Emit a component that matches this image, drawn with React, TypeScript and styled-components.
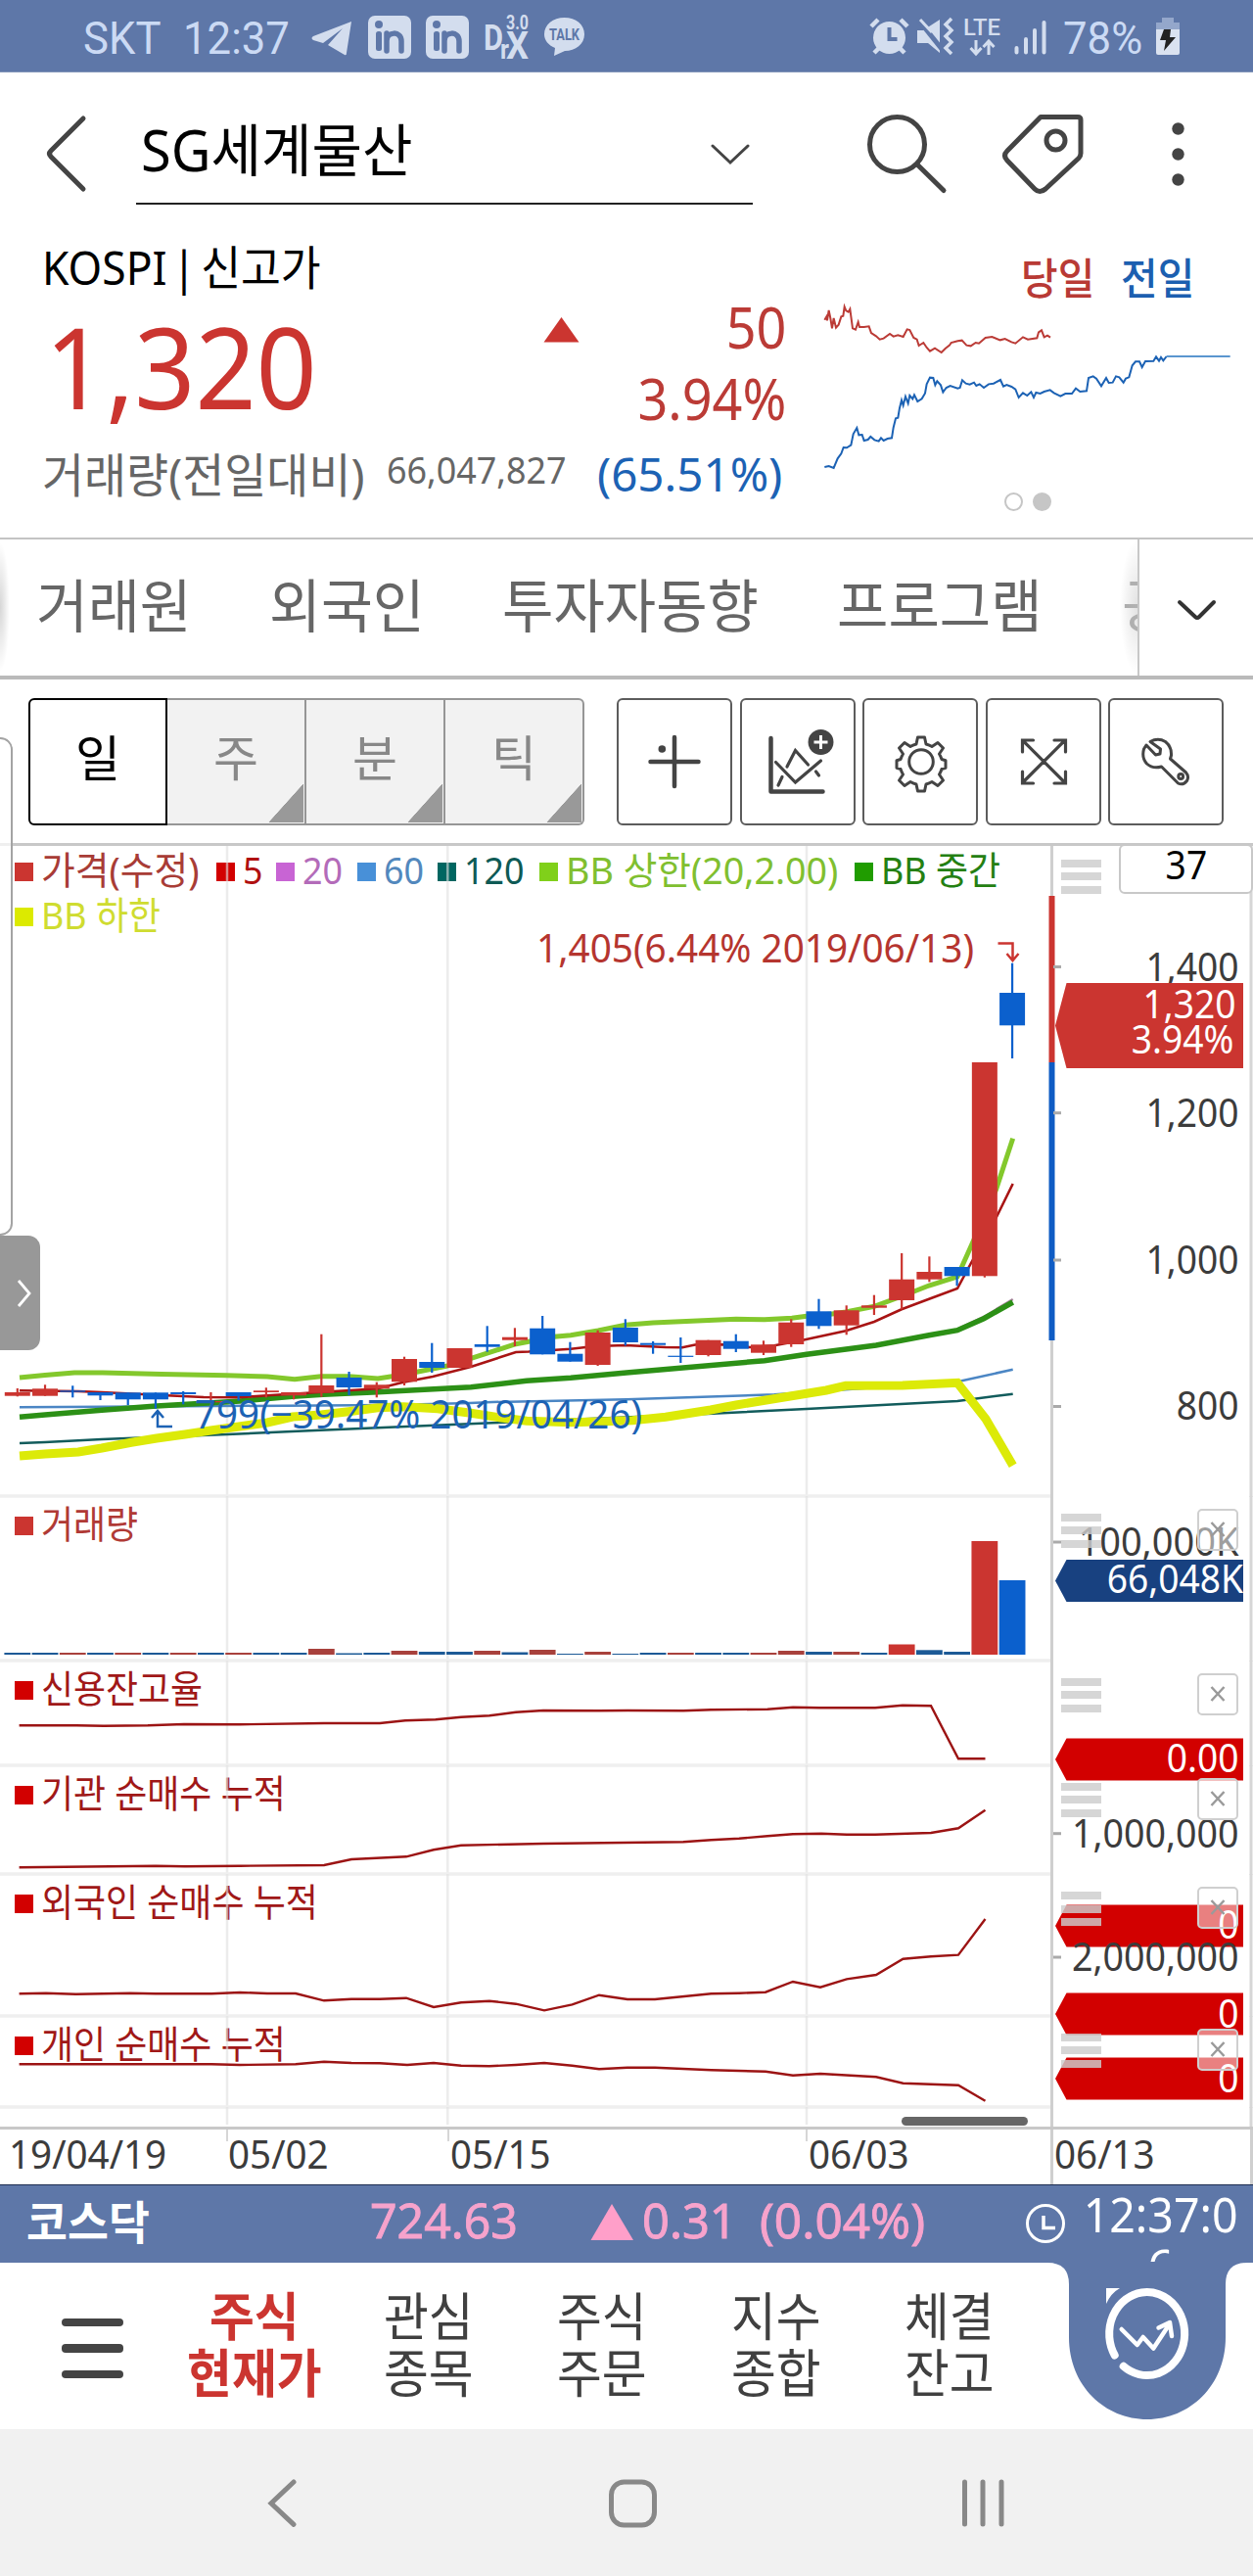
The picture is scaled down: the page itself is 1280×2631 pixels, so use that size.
import React from "react";
import styled, { createGlobalStyle } from "styled-components";

const RED = "#cb3530";
const BLUE = "#0b60cd";
const DEEP = "#d20000";
const NAVY = "#5e77a8";
const FONT = `"Noto Sans", "Noto Sans CJK KR", sans-serif`;

const Global = createGlobalStyle`
  * { box-sizing: border-box; }
  body { margin: 0; background: #fff; font-family: ${FONT}; }
  svg { display: block; overflow: visible; }
`;

const Screen = styled.div`
  width: 1280px;
  height: 2631px;
  display: flex;
  flex-direction: column;
  background: #fff;
  overflow: hidden;
  position: relative;
`;

const Text = styled.span<{
  $size: number;
  $color?: string;
  $sx?: number;
  $weight?: number;
  $end?: boolean;
  $top?: number;
  $word?: number;
  $stroke?: number;
}>`
  display: block;
  flex: none;
  white-space: pre;
  line-height: 1;
  font-size: ${(p) => p.$size}px;
  color: ${(p) => p.$color ?? "#000"};
  font-weight: ${(p) => p.$weight ?? 400};
  margin-top: ${(p) => p.$top ?? 0}px;
  word-spacing: ${(p) => p.$word ?? 0}px;
  -webkit-text-stroke: ${(p) => p.$stroke ?? 0}px ${(p) => p.$color ?? "#000"};
  transform: scaleX(${(p) => p.$sx ?? 0.93});
  transform-origin: ${(p) => (p.$end ? "right" : "left")} center;
`;

/* ---------- status bar ---------- */

const StatusBar = styled.header`
  height: 74px;
  flex: none;
  display: flex;
  justify-content: space-between;
  padding: 0 75px 0 85px;
  background: ${NAVY};
  border-bottom: 1px solid #8396b8;
`;
const StatusGroup = styled.div`
  display: flex;
  align-items: flex-start;
`;
const StatusText = styled.span<{ $w: number }>`
  width: ${(p) => p.$w}px;
  padding-top: 12px;
  font: 400 47px/54px Roboto, sans-serif;
  color: #cbdaf4;
  white-space: pre;
  transform: scaleX(0.93);
  transform-origin: left center;
`;
const ICON = "#d3ddee";

const LinkedIn = ({ x }: { x: number }) => (
  <g transform={`translate(${x} 16)`}>
    <rect width="44" height="44" rx="7" fill={ICON} />
    <circle cx="11" cy="9" r="4" fill={NAVY} />
    <rect x="8" y="16" width="6" height="20" rx="2.5" fill={NAVY} />
    <path d="M19 36V18M19 26c0-10 15-11 15 0v10" fill="none" stroke={NAVY} strokeWidth="5.5" strokeLinecap="round" />
  </g>
);

const NoticeIcons = () => (
  <svg width="300" height="74" viewBox="311 0 300 74">
    <path d="M359 22 320 37q-3 2 0 4l10 3 20-15-15 17 17 10q2 1 2-2z" fill={ICON} />
    <LinkedIn x={376} />
    <LinkedIn x={435} />
    <g fill={ICON} fontFamily="Roboto, sans-serif" fontWeight="700">
      <text x="494" y="51" fontSize="36" textLength="20" lengthAdjust="spacingAndGlyphs">D</text>
      <text x="511" y="60" fontSize="28" textLength="9" lengthAdjust="spacingAndGlyphs">r</text>
      <text x="517" y="60" fontSize="38" textLength="23" lengthAdjust="spacingAndGlyphs">X</text>
      <text x="517" y="30" fontSize="20" textLength="23" lengthAdjust="spacingAndGlyphs">3.0</text>
    </g>
    <path d="M576.500 18c12 0 20.500 7 20.500 17s-9 17-20 17l-11 5 1-8c-7-3-11-8-11-14 0-10 9-17 20.500-17z" fill={ICON} />
    <text x="561" y="41" fontSize="16" fontWeight="700" fontFamily="Roboto, sans-serif" fill={NAVY} textLength="31" lengthAdjust="spacingAndGlyphs">TALK</text>
  </svg>
);

const SystemIcons = () => (
  <svg width="200" height="74" viewBox="885 0 200 74">
    <circle cx="907.500" cy="38.500" r="16.500" fill={ICON} />
    <path d="M907.500 28v12h8" fill="none" stroke={NAVY} strokeWidth="4" />
    <path d="M889 27l7-7M926 27l-7-7M892 54l6-6M923 54l-6-6" stroke={ICON} strokeWidth="4.500" />
    <path d="M936 31h6l17-11v34l-12-10h-11z" fill={ICON} />
    <path d="M937 20l24 30" stroke={NAVY} strokeWidth="5" />
    <path d="M939 20l12 13" stroke={ICON} strokeWidth="3" />
    <path d="M971 19l-6 6 6 6-6 6 6 6-6 6 6 6" fill="none" stroke={ICON} strokeWidth="3.500" />
    <text x="983" y="36" fontSize="23" fontWeight="500" fontFamily="Roboto, sans-serif" fill={ICON} textLength="38" lengthAdjust="spacingAndGlyphs">LTE</text>
    <path d="M996 41v14M990.500 49l5.500 6 5.500-6M1009 56V42M1003.500 48l5.500-6 5.500 6" fill="none" stroke={ICON} strokeWidth="3" />
    <path d="M1037.500 49v4.500M1047 40v13.500M1056 31v22.500M1065.500 23v30.500" stroke={ICON} strokeWidth="4" strokeLinecap="round" />
  </svg>
);

const Battery = () => (
  <svg width="24" height="74" viewBox="1181 0 24 74">
    <path d="M1187 18h12v5h6v7h-24v-7h6z" fill="#94a7cb" />
    <path d="M1181 30h24v24q0 2-2 2h-20q-2 0-2-2z" fill="#dae2f0" />
    <path d="M1189 30h7l-1 8h6l-12 14 2-11h-6z" fill="#222" />
  </svg>
);

/* ---------- header ---------- */

const Header = styled.div`
  height: 156px;
  flex: none;
  display: flex;
`;
const BackBox = styled.div`
  width: 139px;
`;
const NameField = styled.div`
  width: 630px;
  height: 135px;
  display: flex;
  justify-content: space-between;
  padding: 49px 3px 0 5px;
  border-bottom: 2.500px solid #222;
`;

/* ---------- quote ---------- */

const Quote = styled.section`
  height: 319px;
  flex: none;
  display: flex;
`;
const QuoteMain = styled.div`
  width: 820px;
  display: flex;
  flex-direction: column;
`;
const MarketRow = styled.div`
  height: 67px;
  padding: 19px 0 0 43px;
`;
const PriceRow = styled.div`
  height: 146px;
  display: flex;
  justify-content: space-between;
  padding: 0 17px 0 46px;
`;
const Change = styled.div`
  display: flex;
  gap: 15px;
  flex-direction: column;
  align-items: flex-end;
  padding-top: 8px;
`;
const ChangeLine = styled.div`
  display: flex;
`;
const VolumeRow = styled.div`
  display: flex;
  justify-content: space-between;
  padding: 17px 21px 0 43px;
`;
const VolumeName = styled.div`
  width: 351px;
`;
const VolumeCount = styled.div`
  width: 212px;
`;
const Spark = styled.div`
  flex: 1;
  position: relative;
  display: flex;
  flex-direction: column;
`;
const SparkLegend = styled.div`
  height: 270px;
  display: flex;
  gap: 21px;
  padding: 32px 0 0 223px;
`;
const SparkPlot = styled.svg`
  position: absolute;
  left: -20px;
  top: 0;
`;
const Pager = styled.div`
  display: flex;
  gap: 10px;
  padding: 3px 0 0 206px;
`;
const PagerDot = styled.i<{ $on?: boolean }>`
  width: 19px;
  height: 19px;
  border-radius: 50%;
  border: 2px solid #c6c6c6;
  background: ${(p) => (p.$on ? "#c6c6c6" : "#fff")};
`;

/* ---------- tabs ---------- */

const Tabs = styled.nav`
  height: 145px;
  flex: none;
  display: flex;
  border-top: 2px solid #c4c4c4;
  border-bottom: 4px solid #bababa;
`;
const TabList = styled.div`
  width: 1162px;
  overflow: hidden;
  display: flex;
  padding: 38px 0 0 37px;
  position: relative;
  &::before,
  &::after {
    content: "";
    position: absolute;
    top: 0;
    height: 138px;
  }
  &::before {
    left: 0;
    width: 10px;
    background: radial-gradient(ellipse 10px 66px at left, rgba(0, 0, 0, 0.16), transparent);
  }
  &::after {
    right: 0;
    width: 20px;
    background: radial-gradient(ellipse 18px 69px at right, rgba(190, 190, 190, 0.45), transparent);
  }
`;
const Tab = styled.div<{ $w: number }>`
  width: ${(p) => p.$w}px;
  flex: none;
`;
const TabMore = styled.div`
  flex: 1;
  border-left: 2px solid #c8c8c8;
  padding: 61px 0 0 38px;
`;

/* ---------- chart toolbar ---------- */

const Toolbar = styled.div`
  height: 167px;
  flex: none;
  display: flex;
  padding: 19px 0 0 29px;
`;
const Periods = styled.div`
  display: grid;
  grid-template-columns: 142px 142px 142px 142px;
  width: 568px;
  height: 130px;
  margin-right: 33px;
`;
const Period = styled.div<{ $on?: boolean }>`
  position: relative;
  display: flex;
  justify-content: center;
  padding-top: 34px;
  background: ${(p) => (p.$on ? "#fff" : "#f2f2f2")};
  border: 2px solid ${(p) => (p.$on ? "#000" : "#969696")};
  border-left-width: ${(p) => (p.$on ? 2 : 0)}px;
  &:first-child {
    border-radius: 6px 0 0 6px;
  }
  &:last-child {
    border-radius: 0 6px 6px 0;
  }
`;
const Corner = styled.i`
  position: absolute;
  right: 1px;
  bottom: 1px;
  width: 36px;
  height: 40px;
  background: linear-gradient(to bottom right, transparent 50%, #999 51%);
`;
const Tools = styled.div`
  display: flex;
  gap: 7.500px;
`;
const Tool = styled.button`
  width: 118px;
  height: 130px;
  padding: 0;
  border: 2px solid #5c5c5c;
  border-radius: 6px;
  background: #fff;
`;

/* ---------- chart ---------- */

const Chart = styled.main`
  flex: none;
  height: 1371px;
  display: flex;
  flex-direction: column;
  border-top: 3px solid #c8c8c8;
  border-bottom: 1px solid #1c2c50;
  position: relative;
`;
const PanelRow = styled.section<{ $h: number }>`
  height: ${(p) => p.$h}px;
  flex: none;
  display: flex;
`;
const PlotCell = styled.div`
  width: 1074px;
  position: relative;
`;
const AxisCell = styled.div`
  width: 206px;
  position: relative;
`;
const Layer = styled.svg`
  position: absolute;
  left: 0;
  top: 0;
`;
const Legend = styled.div<{ $top: number }>`
  position: relative;
  display: flex;
  flex-wrap: wrap;
  padding: ${(p) => p.$top}px 0 0 15px;
`;
const LegendItem = styled.div<{ $w: number; $color: string }>`
  width: ${(p) => p.$w}px;
  height: 46px;
  display: flex;
  gap: 8px;
  &::before {
    content: "";
    width: 19px;
    height: 18.500px;
    margin-top: 11px;
    flex: none;
    background: ${(p) => p.$color};
  }
`;
const Handle = styled.div<{ $top: number }>`
  position: absolute;
  left: 10px;
  top: ${(p) => p.$top}px;
  width: 41px;
  height: 35px;
  opacity: 0.82;
  background: repeating-linear-gradient(to bottom, #cdcdcd 0 8px, transparent 8px 13.500px);
`;
const CloseBox = styled.div`
  position: absolute;
  left: 149px;
  top: 13px;
  width: 42px;
  height: 43px;
  border: 2px solid #cfcfcf;
  border-radius: 5px;
  background: rgba(255, 255, 255, 0.5);
  padding: 11px 0 0 11px;
`;
const CountBox = styled.div`
  position: absolute;
  left: 69px;
  top: -2px;
  width: 137px;
  height: 51px;
  border: 2px solid #c8c8c8;
  border-radius: 6px;
  background: #fff;
  display: flex;
  justify-content: center;
`;
const DateRow = styled.div`
  flex: 1;
  display: flex;
  border-top: 3px solid #c8c8c8;
`;
const DateCell = styled.div<{ $w: number; $pad: number; $rule?: boolean; $tick?: boolean }>`
  width: ${(p) => p.$w}px;
  padding: 5px 0 0 ${(p) => p.$pad}px;
  border-left: ${(p) => (p.$rule ? "3px solid #cfcfcf" : "0")};
  background: ${(p) => (p.$tick ? "linear-gradient(#d6d6d6,#d6d6d6) left top / 2px 12px no-repeat" : "none")};
`;
const ScrollThumb = styled.i`
  position: absolute;
  left: 921px;
  top: 1298px;
  width: 129px;
  height: 9px;
  border-radius: 5px;
  background: #666;
`;
const DrawerEdge = styled.div`
  position: absolute;
  left: -12px;
  top: 753px;
  width: 25px;
  height: 509px;
  border: 2px solid #a4a4a4;
  border-radius: 14px;
  background: rgba(255, 255, 255, 0.7);
`;
const DrawerHandle = styled.div`
  position: absolute;
  left: 0;
  top: 1262px;
  width: 41px;
  height: 117px;
  border-radius: 0 12px 12px 0;
  background: #989898;
  padding: 46px 0 0 18px;
`;

const STEP = 28.23;
const FIRST = 17.8;

type Candle = [up: 0 | 1, bodyTop: number, bodyBottom: number, high: number, low: number];
const candles: Candle[] = [
  [1, 1422, 1425.7, 1418, 1426.3],
  [1, 1418.3, 1425.7, 1414.3, 1425.7],
  [0, 1420.3, 1421.7, 1415.3, 1427.3],
  [0, 1422, 1425.3, 1422, 1430],
  [0, 1422.3, 1429.3, 1422.3, 1435],
  [0, 1422.3, 1429.3, 1422.3, 1438.7],
  [0, 1422, 1424, 1421, 1434.3],
  [1, 1431, 1432.3, 1422, 1433.3],
  [0, 1422, 1426, 1422, 1430.7],
  [1, 1420.3, 1422, 1417.3, 1427.3],
  [1, 1422, 1425.3, 1422, 1429.3],
  [1, 1415, 1422.7, 1362.7, 1426.7],
  [0, 1407, 1417, 1401, 1425],
  [1, 1414.3, 1418.3, 1411.7, 1427.3],
  [1, 1388, 1411.3, 1385.7, 1415],
  [0, 1391, 1397, 1371.7, 1402],
  [1, 1377, 1397, 1377, 1397],
  [0, 1373, 1375.7, 1354.3, 1380.7],
  [1, 1365.7, 1368.7, 1356.3, 1375],
  [0, 1356.7, 1383.3, 1344, 1383.3],
  [0, 1382.7, 1390.7, 1370.7, 1390.7],
  [1, 1361, 1394, 1358.7, 1395],
  [0, 1356, 1371, 1347.3, 1374.3],
  [0, 1371.7, 1373.7, 1370, 1382.7],
  [0, 1384.7, 1385.9, 1366, 1392],
  [1, 1368.7, 1384, 1368.7, 1385.3],
  [0, 1369.7, 1377.7, 1362.7, 1381],
  [1, 1373.3, 1381.7, 1369.3, 1384],
  [1, 1350.7, 1373, 1347.3, 1375.7],
  [0, 1339.3, 1354.3, 1326.7, 1357.3],
  [1, 1338.3, 1353.7, 1333.3, 1363.3],
  [1, 1333.3, 1335.7, 1322.7, 1343],
  [1, 1306.7, 1328, 1280, 1337.3],
  [1, 1299, 1306.7, 1283.3, 1309.3],
  [0, 1294, 1303.3, 1294, 1313.3],
  [1, 1085, 1303.3, 1085, 1304.7],
  [0, 1014, 1047.3, 983.7, 1081],
];

const volumes: [up: 0 | 1, height: number][] = [
  [0, 2], [0, 2], [1, 2], [0, 2], [1, 2], [0, 2], [1, 2], [0, 2], [1, 2], [0, 2], [0, 2], [1, 6], [0, 1.5],
  [0, 2], [1, 4], [0, 3], [0, 3], [1, 4], [0, 2.5], [1, 5], [0, 1], [1, 3], [0, 1], [0, 2], [1, 2], [0, 2],
  [0, 2], [1, 2], [1, 4], [0, 3], [1, 3], [0, 2], [1, 10.5], [0, 4.7], [0, 3], [1, 116], [0, 76],
];

const overlays: { color: string; width: number; points: string }[] = [
  { color: "#4b86c4", width: 2.5, points: "20,1437.3 150,1436.5 400,1435 480,1433 503,1432 640,1429.3 791,1424.3 925,1415 978,1411.3 1034.7,1398.7" },
  { color: "#125c5c", width: 2.5, points: "20,1474 46,1473 104,1470 232,1465 304,1461.7 503,1453.3 728,1443.7 824,1439 978,1431 1034.7,1423.7" },
  { color: "#a9829e", width: 2.5, points: "978,1357.5 1005,1345 1034.7,1327" },
  { color: "#83c82c", width: 5, points: "20,1407 46,1404.5 76,1402 105,1402 165,1403.5 231,1404.7 273,1406 301,1408.7 328,1405.7 356,1405.7 386,1408 412,1404 427,1401 457,1395 483.5,1386.7 527,1372.7 566,1365.3 583,1363.7 611,1359 639,1353.3 667,1351 752,1347.3 781,1347.7 809,1346.3 824,1344.3 850,1342 864,1340 893,1334.3 921,1324 949,1313 978,1304 992,1272.7 1017.5,1215 1034.7,1162.7" },
  { color: "#2c9016", width: 5.5, points: "20,1447.3 46,1445 104,1440.3 160,1436 217,1432.7 245,1431 299,1426.3 330,1424.3 386,1421.7 481,1416.7 538,1410.3 583,1407.3 640,1402 781,1389.7 824,1383.3 895,1374 949,1363.7 978,1358.7 1005,1346.7 1034.7,1330" },
  { color: "#a81414", width: 2.6, points: "20,1420.3 80,1421 104,1422 165,1425 208,1427 245,1427.3 277,1425 386,1418.3 412,1411.7 442,1406 481,1396 527,1381 540,1380.5 583,1377.7 607,1375 639,1374 680,1376 697,1376.3 710,1373.5 738,1373.3 766,1376 791,1374.3 820,1368.7 864,1359.3 893,1350 921,1337.3 949,1326.7 978,1316 992,1290 1017.5,1244 1034.7,1209" },
  { color: "#dcea08", width: 9, points: "20,1487 46,1485 80,1483 104,1479 134,1473.3 160,1469 189,1465 217,1460.7 273,1453 299,1447 328,1445 356,1441.7 386,1437.7 412,1436.7 447,1438.7 481,1443.3 512,1448 538,1451.3 583,1452.7 611,1452 646,1450.7 680,1447.3 726,1440 752,1435 824,1423.3 844,1420 864,1415.3 922,1415 978,1412.3 1007,1449.3 1034.7,1496.7" },
];

const credit = "19.6,1762.3 78,1762.3 106,1762.7 151,1762.3 188,1761 245,1761.3 331,1760 388,1760 414,1757.3 445,1756.3 471,1753.7 500,1752.3 527,1748.7 555,1747 612,1747.3 641,1747 698,1747.3 726.5,1746.3 784,1745.7 810,1743.7 837,1744.3 894,1744.3 922,1741.7 951,1742.3 979,1796.3 1006.5,1796.3";
const institution = "19.6,1907.3 159,1905.7 189,1906.3 245,1905.7 331,1905 359,1899 415,1896.3 443,1889.3 471,1884.7 555,1883 698,1881.3 726.5,1879.3 755,1877.7 784,1875.3 810,1873.3 839,1872.7 865,1873.7 894,1873.7 951,1872 979,1867.3 1006.5,1848.7";
const foreign = "19.6,2036.3 47,2035.7 77.5,2036.7 133,2035.7 159,2036.3 216,2036.3 245,2035 273,2036 302,2036 331,2043.3 359,2041.7 388,2041.7 415,2040.7 443,2050 471,2045.3 500,2043.7 527,2046.7 556,2053.3 584.5,2047.3 612,2037.7 641,2042 669,2042 726.5,2036.3 755,2035.7 782,2034.7 810,2024 838,2029.7 865,2021.3 895,2017 922.5,2000.7 951,1998.3 979,1996.7 1006.5,1960";
const individual = "19.6,2108.3 216,2108.3 245,2109 302,2108.3 331,2105.7 359,2107 388,2107.3 416,2109 443,2107 471,2109.7 500,2110.3 527,2109 556,2107 584.5,2109.7 612,2113.3 641,2111.7 669,2111.7 726.5,2114.3 782,2115.7 810,2119.7 838,2118 895,2121.3 922.5,2127.7 979,2129.7 1006.5,2145.7";

const sparkToday = "127,290 133,280 135,292 140,261 145,285 150,316 155,285 162,314 170,305 178,280 184,278 188,250 193,262 200,266 205,257 213,316 222,320 230,297 234,312 248,312 263,310 270,330 285,340 296,350 308,347 327,333 338,341 352,337 368,342 380,319 388,321 400,345 410,350 416,369 430,360 440,375 450,386 465,377 485,390 497,378 510,368 515,360 535,355 548,353 562,368 575,370 590,360 600,362 620,345 640,342 665,352 680,348 700,358 712,362 735,343 750,350 778,346 783,328 792,322 800,343 810,338 819,344";
const sparkPrev = "127,741 140,738 155,744 167,715 178,700 185,681 195,682 208,674 215,640 226,621 232,643 242,642 248,660 260,657 268,648 280,658 293,662 300,652 308,660 320,654 333,652 338,620 345,592 352,590 357,560 363,536 368,552 375,525 383,546 388,522 397,532 402,520 412,540 425,532 435,515 440,487 450,467 460,468 466,490 472,478 483,490 490,512 500,498 512,492 535,500 542,498 549,475 560,485 572,488 585,482 592,492 602,487 615,498 630,487 645,485 666,474 675,494 685,489 700,495 712,503 722,528 735,514 748,522 760,511 768,528 775,513 788,516 800,510 818,505 830,514 850,524 865,516 885,516 897,500 910,510 930,508 936,468 950,463 960,470 975,493 990,468 998,483 1010,482 1020,463 1030,466 1043,482 1050,470 1060,466 1070,430 1080,418 1092,418 1100,435 1110,417 1135,416 1143,403 1152,416 1158,405 1165,415 1175,402";

const Grid = ({ top, h }: { top: number; h: number }) => (
  <g stroke="#e0e0e0" strokeOpacity="0.62" strokeWidth="2.500">
    {[232, 457.3, 824].map((x) => (
      <path key={x} d={`M${x} ${top}v${h}`} />
    ))}
  </g>
);

const AxisText = ({ y, children, color = "#3c3c3c", x = 1265.5, sx = 0.93 }: { y: number; children: string; color?: string; x?: number; sx?: number }) => (
  <text transform={`translate(${x} ${y}) scale(${sx} 1)`} textAnchor="end" fontSize="40" fontFamily={FONT} fill={color}>
    {children}
  </text>
);
const Tick = ({ y }: { y: number }) => <path d={`M1076 ${y}h8`} stroke="#aaa" strokeWidth="3" />;
const Tag = ({ top, bottom, color }: { top: number; bottom: number; color: string }) => (
  <path d={`M1270 ${top}H1089.500L1078 ${(top + bottom) / 2}L1089.500 ${bottom}H1270z`} fill={color} />
);

interface PanelProps {
  top: number;
  h: number;
  plot: React.ReactNode;
  axis: React.ReactNode;
  legend: React.ReactNode;
  spine?: React.ReactNode;
  count?: string;
}
const Panel = ({ top, h, plot, axis, legend, spine, count }: PanelProps) => (
  <PanelRow $h={h}>
    <PlotCell>
      <Legend $top={count ? 6 : 10}>{legend}</Legend>
      <Layer width="1074" height={h} viewBox={`0 ${top} 1074 ${h}`}>
        <Grid top={top} h={h} />
        {plot}
        <path d={`M0 ${top + h}H1073`} stroke="#efefef" strokeWidth="3.500" />
      </Layer>
    </PlotCell>
    <AxisCell>
      <Layer width="206" height={h} viewBox={`1074 ${top} 206 ${h}`}>
        <path d={`M1074.500 ${top}v${h + 1}`} stroke="#cfcfcf" strokeWidth="3" />
        <path d={`M1278 ${top}v${h + 1}`} stroke="#d6d6d6" strokeWidth="3" />
        {spine}
        {axis}
      </Layer>
      <Handle $top={count ? 14 : 17.5} />
      {count ? (
        <CountBox>
          <Text $size={40} $top={-1} style={{ transformOrigin: "center" }}>{count}</Text>
        </CountBox>
      ) : (
        <CloseBox>
          <svg width="16" height="16" viewBox="0 0 16 16">
            <path d="M1.500 1l13 14M14.500 1l-13 14" stroke="#9a9a9a" strokeWidth="2.500" />
          </svg>
        </CloseBox>
      )}
    </AxisCell>
  </PanelRow>
);

const Item = ({ w, color, text, sx = 0.92, children }: { w: number; color: string; text?: string; sx?: number; children: string }) => (
  <LegendItem $w={w} $color={color}>
    <Text $size={39} $color={text ?? color} $sx={sx} $top={-2.5}>{children}</Text>
  </LegendItem>
);

const Curve = ({ points }: { points: string }) => (
  <polyline points={points} fill="none" stroke="#9c1414" strokeWidth="2.400" />
);

const PricePlot = () => (
  <>
    {overlays.map((o) => (
      <polyline key={o.color} points={o.points} fill="none" stroke={o.color} strokeWidth={o.width} />
    ))}
    {candles.map(([up, a, b, hi, lo], i) => {
      const x = FIRST + STEP * i;
      const c = up ? RED : BLUE;
      return (
        <g key={i} fill={c}>
          <rect x={x - 1.1} y={hi} width="2.200" height={lo - hi} />
          <rect x={x - 13} y={a} width="26" height={b - a} />
        </g>
      );
    })}
    <text x="548" y="982.500" fontSize="40" fontFamily={FONT} fill="#b5352f" textLength="447" lengthAdjust="spacingAndGlyphs">
      1,405(6.44% 2019/06/13)
    </text>
    <path d="M1019.500 963.500h15v17M1028.500 974l6 7 6-7" fill="none" stroke={RED} strokeWidth="2.500" />
    <text x="199" y="1458.500" fontSize="40" fontFamily={FONT} fill="#1c62b4" textLength="457" lengthAdjust="spacingAndGlyphs">
      799(−39.47% 2019/04/26)
    </text>
    <path d="M176 1457h-15v-16M155 1448l6-7 6 7" fill="none" stroke="#1c62b4" strokeWidth="2.500" />
  </>
);

const VolumePlot = () => (
  <>
    {volumes.map(([up, hgt], i) => (
      <rect key={i} x={FIRST + STEP * i - 13.4} y={1690 - hgt} width="26.800" height={hgt} fill={up ? (hgt < 9 ? "#a8413c" : RED) : hgt < 9 ? "#1d5a96" : BLUE} />
    ))}
  </>
);

/* ---------- ticker and bottom bars ---------- */

const Ticker = styled.div`
  height: 79px;
  flex: none;
  display: flex;
  background: ${NAVY};
  overflow: hidden;
`;
const TickerCell = styled.div<{ $w: number; $pad?: number }>`
  width: ${(p) => p.$w}px;
  padding-left: ${(p) => p.$pad ?? 0}px;
  flex: none;
`;
const Clock = styled.div`
  width: 182px;
  height: 79px;
  flex: none;
  overflow: hidden;
  padding-top: 3px;
  font-size: 50px;
  line-height: 53px;
  color: #fff;
  text-align: center;
  word-break: break-all;
  transform: scaleX(0.93);
  transform-origin: left center;
`;
const BottomNav = styled.nav`
  height: 170px;
  flex: none;
  display: flex;
  position: relative;
`;
const MenuBars = styled.div`
  width: 171px;
  display: flex;
  flex-direction: column;
  gap: 18px;
  padding: 57px 0 0 63px;
`;
const Bar = styled.i`
  width: 63px;
  height: 8.300px;
  border-radius: 4px;
  background: #444;
`;
const NavItem = styled.div<{ $on?: boolean }>`
  width: 177.600px;
  padding-top: 26px;
  font-size: 53px;
  line-height: 58px;
  text-align: center;
  white-space: pre;
  color: ${(p) => (p.$on ? RED : "#404040")};
  font-weight: ${(p) => (p.$on ? 700 : 400)};
  transform: scaleX(0.94);
`;
const Blob = styled.svg`
  position: absolute;
  left: 1070px;
  top: -1px;
`;
const SystemNav = styled.footer`
  flex: 1;
  background: #f1f1f1;
`;

export default function App() {
  return (
    <Screen>
      <Global />
      <StatusBar>
        <StatusGroup>
          <StatusText $w={102}>SKT</StatusText>
          <StatusText $w={124}>12:37</StatusText>
          <NoticeIcons />
        </StatusGroup>
        <StatusGroup>
          <SystemIcons />
          <StatusText $w={95}>78%</StatusText>
          <Battery />
        </StatusGroup>
      </StatusBar>

      <Header>
        <BackBox>
          <svg width="139" height="156" viewBox="0 74 139 156">
            <path d="M85 121L52 154q-3 3 0 6L85 193" fill="none" stroke="#444" strokeWidth="5" strokeLinecap="round" />
          </svg>
        </BackBox>
        <NameField>
          <Text $size={58} $sx={0.965} $top={1}>SG세계물산</Text>
          <svg width="40" height="40" viewBox="726 123 40 40">
            <path d="M728 149l18 17 18-17" fill="none" stroke="#444" strokeWidth="3" strokeLinecap="round" />
          </svg>
        </NameField>
        <svg width="511" height="156" viewBox="769 74 511 156">
          <g fill="none" stroke="#444" strokeWidth="5" strokeLinecap="round" strokeLinejoin="round">
            <circle cx="916.500" cy="147.500" r="28" />
            <path d="M937 168l27 26.500" />
            <path d="M1063 119.500h38q3 0 3 3v34q0 3-2 5l-34 31.500q-6 5-11 0l-28-29q-5-5 0-10z" />
            <circle cx="1078.500" cy="143.500" r="9.500" />
          </g>
          {[131.5, 157.5, 183.5].map((y) => (
            <circle key={y} cx="1203.500" cy={y} r="6.200" fill="#444" />
          ))}
        </svg>
      </Header>

      <Quote>
        <QuoteMain>
          <MarketRow>
            <Text $size={48} $sx={0.925} $word={-7}>KOSPI | 신고가</Text>
          </MarketRow>
          <PriceRow>
            <Text $size={115} $color={RED} $top={19} $sx={0.945}>1,320</Text>
            <Change>
              <ChangeLine>
                <svg width="248" height="58" viewBox="554 305 248 58">
                  <path d="M570.500 324L588.500 349.500H552.500z" fill={RED} />
                </svg>
                <Text $size={58} $color="#bb3b36" $end style={{ marginLeft: -68 }}>50</Text>
              </ChangeLine>
              <Text $size={58} $color="#bb3b36" $end>3.94%</Text>
            </Change>
          </PriceRow>
          <VolumeRow>
            <VolumeName>
              <Text $size={48} $color="#666" $sx={0.975} $top={1}>거래량(전일대비)</Text>
            </VolumeName>
            <VolumeCount>
              <Text $size={38} $color="#666" $sx={0.945}>66,047,827</Text>
            </VolumeCount>
            <Text $size={48} $color="#1c62b4" $end $sx={0.99}>(65.51%)</Text>
          </VolumeRow>
        </QuoteMain>
        <Spark>
          <SparkPlot width="480" height="319" viewBox="0 0 1440 957">
            <polyline points={sparkToday} fill="none" stroke="#bb3b36" strokeWidth="6" />
            <polyline points={sparkPrev} fill="none" stroke="#1c62b4" strokeWidth="6" />
            <path d="M1175 402H1370" stroke="#5a96cf" strokeWidth="6" />
          </SparkPlot>
          <SparkLegend>
            <Text $size={44} $color="#b83a35" $weight={500}>당일</Text>
            <Text $size={44} $color="#1c5fb0" $weight={500}>전일</Text>
          </SparkLegend>
          <Pager>
            <PagerDot />
            <PagerDot $on />
          </Pager>
        </Spark>
      </Quote>

      <Tabs>
        <TabList>
          <Tab $w={238}><Text $size={59} $color="#666" $sx={0.975}>거래원</Text></Tab>
          <Tab $w={238}><Text $size={59} $color="#666" $sx={0.975}>외국인</Text></Tab>
          <Tab $w={342}><Text $size={59} $color="#666" $sx={0.965}>투자자동향</Text></Tab>
          <Tab $w={291}><Text $size={59} $color="#666" $sx={0.965}>프로그램</Text></Tab>
          <Tab $w={291}><Text $size={59} $color="#aaa" $sx={0.965}>공매도</Text></Tab>
        </TabList>
        <TabMore>
          <svg width="40" height="24" viewBox="0 0 40 24">
            <path d="M3 3l16 15q2 2 4 0L38 3" fill="none" stroke="#333" strokeWidth="4" strokeLinecap="round" />
          </svg>
        </TabMore>
      </Tabs>

      <Toolbar>
        <Periods>
          <Period $on><Text $size={50} $sx={1}>일</Text></Period>
          <Period><Text $size={50} $sx={1} $color="#888">주</Text><Corner /></Period>
          <Period><Text $size={50} $sx={1} $color="#888">분</Text><Corner /></Period>
          <Period><Text $size={50} $sx={1} $color="#888">틱</Text><Corner /></Period>
        </Periods>
        <Tools>
          <Tool>
            <svg width="114" height="126" viewBox="632 715 114 126">
              <g stroke="#444" strokeWidth="4.500" strokeLinecap="round">
                <path d="M689 753v50M664.500 778h49" />
              </g>
              <circle cx="676.300" cy="765" r="3.800" fill="#444" />
            </svg>
          </Tool>
          <Tool>
            <svg width="114" height="126" viewBox="757.500 715 114 126">
              <path d="M787 754v54.500h53" fill="none" stroke="#444" strokeWidth="4.500" strokeLinecap="round" strokeLinejoin="round" />
              <g fill="none" stroke="#444" strokeWidth="3.200" strokeLinecap="round">
                <path d="M792 778.500l20 20.500 26-22M803.500 783l8.500-16.500L825 781M794.500 802l4-8.500M833 788l3 4" />
              </g>
              <circle cx="838" cy="758" r="13" fill="#444" />
              <path d="M838 751v14M831 758h14" stroke="#fff" strokeWidth="3" />
            </svg>
          </Tool>
          <Tool>
            <svg width="114" height="126" viewBox="883 715 114 126">
              <g fill="none" stroke="#444" strokeWidth="3" strokeLinejoin="round">
                <path d="M937.500 753.500h7l1.500 7q3.500 1 6 2.500l6-4 5.500 5.500-4 6q1.500 2.500 2.500 5.500l4 1.200v7.600l-4 1.200q-1 3-2.500 5.500l4 6-5.500 5.500-6-4q-2.500 1.500-6 2.500l-1.500 7h-7l-1.500-7q-3.500-1-6-2.500l-6 4-5.500-5.500 4-6q-1.500-2.500-2.500-5.500l-4-1.200v-7.600l4-1.200q1-3 2.500-5.500l-4-6 5.500-5.500 6 4q2.500-1.500 6-2.500z" transform="translate(0 -.500)" />
                <circle cx="941" cy="778" r="12.300" />
              </g>
            </svg>
          </Tool>
          <Tool>
            <svg width="114" height="126" viewBox="1009 715 114 126">
              <g fill="none" stroke="#444" strokeWidth="3.200" strokeLinecap="round">
                <path d="M1045 756.500l42.500 42.500M1087.500 756.500L1045 799M1044.500 768v-12h11M1077 756h11.500v12M1088.500 788v12H1077M1055.500 800h-11v-12" />
              </g>
            </svg>
          </Tool>
          <Tool>
            <svg width="114" height="126" viewBox="1134.500 715 114 126">
              <g fill="none" stroke="#444" strokeWidth="3" strokeLinejoin="round">
                <path d="M1175.500 757.500q8-4.500 15.500 0 6.500 5 6 14l-1 3.500 16 14q3.500 4 1 8.500-4 5-9 2.500l-17-17q-9 2.500-15-3-5.500-6-3-15l2.500-4 9.500 10 4.500-1 .500-5z" />
                <circle cx="1206.700" cy="793" r="2.400" />
              </g>
            </svg>
          </Tool>
        </Tools>
      </Toolbar>

      <Chart>
        <Panel
          top={864}
          h={664}
          count="37"
          legend={
            <>
              <Item w={205.5} color={RED} text="#a83c36" sx={0.968}>가격(수정)</Item>
              <Item w={61} color={DEEP} text="#b01010">5</Item>
              <Item w={83} color="#c864d4" text="#b36bb9">20</Item>
              <Item w={82.5} color="#4890d8" text="#5288bd">60</Item>
              <Item w={104} color="#006661" text="#0e5a55">120</Item>
              <Item w={322} color="#80d01a" text="#80bf30" sx={0.965}>BB 상한(20,2.00)</Item>
              <Item w={190} color="#209c00" text="#248012">BB 중간</Item>
              <Item w={300} color="#dcea00" text="#cfdc30">BB 하한</Item>
            </>
          }
          plot={<PricePlot />}
          spine={
            <>
              <path d="M1074.500 915V1085" stroke={RED} strokeWidth="6" />
              <path d="M1074.500 1085V1369" stroke="#0f5cc4" strokeWidth="6" />
            </>
          }
          axis={
            <>
              <Tick y={987.5} />
              <Tick y={1136.7} />
              <Tick y={1287} />
              <Tick y={1436.5} />
              <AxisText y={1001.5}>1,400</AxisText>
              <Tag top={1004} bottom={1091} color={RED} />
              <AxisText y={1040} x={1262.5} color="#fff">1,320</AxisText>
              <AxisText y={1076} x={1260.5} color="#fff">3.94%</AxisText>
              <AxisText y={1150.7}>1,200</AxisText>
              <AxisText y={1300.7}>1,000</AxisText>
              <AxisText y={1450}>800</AxisText>
            </>
          }
        />
        <Panel
          top={1528}
          h={168}
          legend={<Item w={400} color={RED} text="#b03a35">거래량</Item>}
          plot={<VolumePlot />}
          axis={
            <>
              <Tick y={1575} />
              <AxisText y={1588.500} sx={0.95}>100,000K</AxisText>
              <Tag top={1593} bottom={1636} color="#184180" />
              <AxisText y={1627} x={1270} color="#fff">66,048K</AxisText>
            </>
          }
        />
        <Panel
          top={1696}
          h={107}
          legend={<Item w={400} color={DEEP} text="#a01818">신용잔고율</Item>}
          plot={<Curve points={credit} />}
          axis={
            <>
              <Tag top={1775.5} bottom={1818.5} color={DEEP} />
              <AxisText y={1810} color="#fff">0.00</AxisText>
            </>
          }
        />
        <Panel
          top={1803}
          h={111}
          legend={<Item w={400} color={DEEP} text="#a01818">기관 순매수 누적</Item>}
          plot={<Curve points={institution} />}
          axis={
            <>
              <Tick y={1872.700} />
              <AxisText y={1887} sx={0.94}>1,000,000</AxisText>
            </>
          }
        />
        <Panel
          top={1914}
          h={145}
          legend={<Item w={400} color={DEEP} text="#a01818">외국인 순매수 누적</Item>}
          plot={<Curve points={foreign} />}
          axis={
            <>
              <Tick y={1999} />
              <Tag top={1945.5} bottom={1988.5} color={DEEP} />
              <AxisText y={1980} color="#fff">0</AxisText>
              <AxisText y={2013} sx={0.94}>2,000,000</AxisText>
              <Tag top={2035.5} bottom={2078.5} color={DEEP} />
              <AxisText y={2070.500} color="#fff">0</AxisText>
            </>
          }
        />
        <Panel
          top={2059}
          h={93}
          legend={<Item w={400} color={DEEP} text="#a01818">개인 순매수 누적</Item>}
          plot={<Curve points={individual} />}
          axis={
            <>
              <Tag top={2101.5} bottom={2144.5} color={DEEP} />
              <AxisText y={2136.500} color="#fff">0</AxisText>
            </>
          }
        />
        <PanelRow $h={20}>
          <PlotCell>
            <Layer width="1074" height="20" viewBox="0 2152 1074 20">
              <Grid top={2152} h={18} />
            </Layer>
          </PlotCell>
          <AxisCell>
            <Layer width="206" height="20" viewBox="1074 2152 206 20">
              <path d="M1074.500 2152v20" stroke="#cfcfcf" strokeWidth="3" />
              <path d="M1278 2152v20" stroke="#d6d6d6" strokeWidth="3" />
            </Layer>
          </AxisCell>
        </PanelRow>
        <DateRow>
          <DateCell $w={231} $pad={9}><Text $size={40} $color="#3c3c3c" $sx={0.965}>19/04/19</Text></DateCell>
          <DateCell $w={225.5} $pad={2} $tick><Text $size={40} $color="#3c3c3c" $sx={0.965}>05/02</Text></DateCell>
          <DateCell $w={366.5} $pad={3} $tick><Text $size={40} $color="#3c3c3c" $sx={0.965}>05/15</Text></DateCell>
          <DateCell $w={250} $pad={3} $tick><Text $size={40} $color="#3c3c3c" $sx={0.965}>06/03</Text></DateCell>
          <DateCell $w={204} $pad={1} $rule><Text $size={40} $color="#3c3c3c" $sx={0.965}>06/13</Text></DateCell>
          <DateCell $w={3} $pad={0} $rule />
        </DateRow>
        <ScrollThumb />
      </Chart>

      <Ticker>
        <TickerCell $w={378} $pad={27}>
          <Text $size={47} $weight={700} $color="#fff" $top={14} $sx={0.97}>코스닥</Text>
        </TickerCell>
        <TickerCell $w={226}>
          <Text $size={50} $stroke={0.9} $color="#f7a3cc" $top={10} $sx={0.965}>724.63</Text>
        </TickerCell>
        <svg width="43" height="79" viewBox="604 2233 43 79">
          <path d="M625 2252L647 2289H603.500z" fill="#ff9fc9" />
        </svg>
        <TickerCell $w={129} $pad={9}>
          <Text $size={50} $stroke={0.9} $color="#f7a3cc" $top={10} $sx={0.975}>0.31</Text>
        </TickerCell>
        <TickerCell $w={271}>
          <Text $size={50} $stroke={0.9} $color="#f7a3cc" $top={10} $sx={0.99}>(0.04%)</Text>
        </TickerCell>
        <svg width="54" height="79" viewBox="1047 2233 54 79">
          <g fill="none" stroke="#fff" strokeWidth="3">
            <circle cx="1068" cy="2272" r="18.500" />
            <path d="M1066 2264v12.500h12" strokeWidth="3.500" />
          </g>
        </svg>
        <Clock>12:37:06</Clock>
      </Ticker>

      <BottomNav>
        <MenuBars>
          <Bar />
          <Bar />
          <Bar />
        </MenuBars>
        <NavItem $on>{"주식\n현재가"}</NavItem>
        <NavItem>{"관심\n종목"}</NavItem>
        <NavItem>{"주식\n주문"}</NavItem>
        <NavItem>{"지수\n종합"}</NavItem>
        <NavItem>{"체결\n잔고"}</NavItem>
        <Blob width="204" height="163" viewBox="1070 2311 204 163">
          <path d="M1070 2311v1q22 0 22 22v54c0 50 37 84 80 84s80-34 80-84v-54q0-22 22-22v-1z" fill={NAVY} />
          <g fill="none" stroke="#fff" strokeLinecap="round" strokeLinejoin="round">
            <path d="M1138.700 2406.500A38.500 42.500 0 1 1 1147.700 2417.800" strokeWidth="8" />
            <path d="M1145.700 2380l16 16 6-8 10.600 11.500 16.500-25M1183.500 2378.500l11.500-5.500 2 14" strokeWidth="4.500" />
          </g>
          <path d="M1130 2338h14q-9 5-14 16z" fill="#fff" />
        </Blob>
      </BottomNav>

      <SystemNav>
        <svg width="1280" height="149" viewBox="0 2482 1280 149">
          <g fill="none" stroke="#888" strokeWidth="5">
            <path d="M300 2536l-23 21.700 23 21.700" strokeLinecap="round" />
            <rect x="624.500" y="2536" width="44" height="44" rx="13" />
            <path d="M985.500 2536v43M1004 2536v43M1023 2536v43" strokeLinecap="round" />
          </g>
        </svg>
      </SystemNav>

      <DrawerEdge />
      <DrawerHandle>
        <svg width="14" height="26" viewBox="0 0 14 26">
          <path d="M1 0l11 13L1 26" fill="none" stroke="#fff" strokeWidth="2.800" />
        </svg>
      </DrawerHandle>
    </Screen>
  );
}
